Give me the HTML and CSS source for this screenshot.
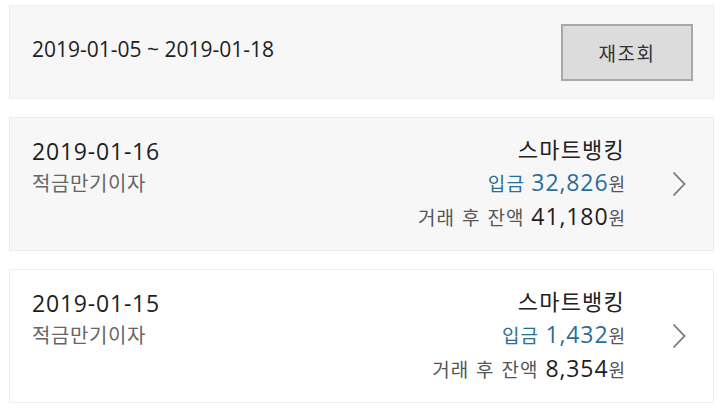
FILE: index.html
```html
<!DOCTYPE html>
<html lang="ko">
<head>
    <meta charset="UTF-8">
    <meta name="viewport" content="width=device-width, initial-scale=1.0">
    <title>거래내역 조회</title>
    <link rel="stylesheet" href="styles.css">
</head>
<body>
    <div class="period-bar">
        <span class="period">2019-01-05 ~ 2019-01-18</span>
        <button class="reload-button">재조회</button>
    </div>

    <div class="history-item shaded">
        <div class="item-left">
            <div class="item-date">2019-01-16</div>
            <div class="item-type">적금만기이자</div>
        </div>
        <div class="item-right">
            <div class="item-channel">스마트뱅킹</div>
            <div class="item-amount">입금 <span class="num">32,826</span><span class="unit">원</span></div>
            <div class="item-balance">거래 후 잔액 <span class="num">41,180</span><span class="unit">원</span></div>
        </div>
        <div class="item-arrow">
            <svg width="14" height="26" viewBox="0 0 14 26"><path d="M1.5 1.5 L12.5 13 L1.5 24.5" fill="none" stroke="#777" stroke-width="1.8"/></svg>
        </div>
    </div>

    <div class="history-item">
        <div class="item-left">
            <div class="item-date">2019-01-15</div>
            <div class="item-type">적금만기이자</div>
        </div>
        <div class="item-right">
            <div class="item-channel">스마트뱅킹</div>
            <div class="item-amount">입금 <span class="num">1,432</span><span class="unit">원</span></div>
            <div class="item-balance">거래 후 잔액 <span class="num">8,354</span><span class="unit">원</span></div>
        </div>
        <div class="item-arrow">
            <svg width="14" height="26" viewBox="0 0 14 26"><path d="M1.5 1.5 L12.5 13 L1.5 24.5" fill="none" stroke="#777" stroke-width="1.8"/></svg>
        </div>
    </div>
</body>
</html>
```

FILE: styles.css
```css
body {
    font-family: "Open Sans", "Noto Sans CJK KR", sans-serif;
    margin: 0;
    padding: 5px 6px 0 9px;
    background-color: #fff;
    color: #222;
}
.period-bar {
    height: 94px;
    box-sizing: border-box;
    background-color: #f7f7f7;
    border: 1px solid #eeeeee;
    display: flex;
    align-items: center;
    justify-content: space-between;
    padding: 0 20px 0 22px;
}
.period {
    font-size: 21px;
    color: #222;
    margin-bottom: 6px;
}
.reload-button {
    width: 132px;
    height: 57px;
    box-sizing: border-box;
    background-color: #dcdcdc;
    border: 2px solid #a8a8a8;
    font-family: "Noto Sans CJK KR", sans-serif;
    font-size: 19px;
    color: #333;
    letter-spacing: 1.5px;
    padding: 0;
}
.history-item {
    margin-top: 18px;
    height: 134px;
    box-sizing: border-box;
    border: 1px solid #eeeeee;
    background-color: #fff;
    display: flex;
    align-items: center;
    padding: 0 0 0 22px;
}
.history-item.shaded {
    background-color: #f7f7f7;
    border-color: #ebebeb;
}
.item-left {
    flex: 1;
    align-self: flex-start;
    padding-top: 17px;
}
.item-date {
    font-size: 23px;
    letter-spacing: 0.8px;
    line-height: 32px;
    color: #1e1e1e;
}
.item-type {
    font-size: 20px;
    line-height: 34px;
    letter-spacing: 0.6px;
    color: #666;
}
.item-right {
    text-align: right;
    line-height: 32.5px;
}
.item-channel {
    font-size: 22px;
    color: #222;
    letter-spacing: 1.2px;
}
.item-amount {
    font-size: 19px;
    letter-spacing: 1.2px;
    color: #2a6e97;
}
.item-balance {
    font-size: 19px;
    letter-spacing: 1px;
    word-spacing: 1px;
    color: #555;
}
.num {
    font-size: 23px;
    letter-spacing: 0.9px;
    word-spacing: 0;
}
.item-balance .num {
    color: #1e1e1e;
}
.unit {
    font-size: 18px;
    letter-spacing: 0;
}
.item-amount .unit {
    color: #555;
}
.item-arrow {
    width: 88px;
    box-sizing: border-box;
    padding-left: 47px;
    display: flex;
    align-items: center;
}
```
